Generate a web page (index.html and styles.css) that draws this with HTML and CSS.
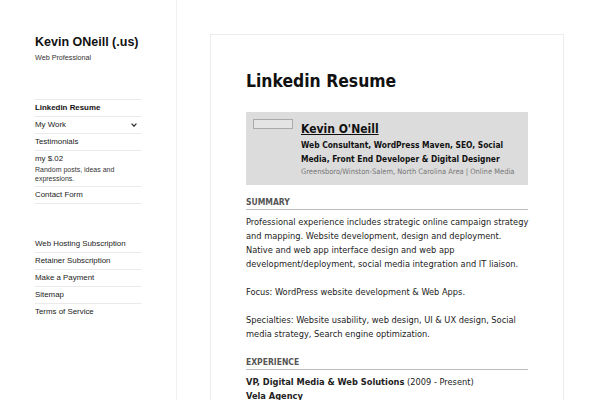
FILE: index.html
```html
<!DOCTYPE html>
<html>
<head>
<meta charset="utf-8">
<link rel="stylesheet" href="styles.css">
</head>
<body>
<div class="page">
  <aside class="sidebar">
    <div class="site-title">Kevin ONeill (.us)</div>
    <div class="site-desc">Web Professional</div>
    <ul class="menu primary">
      <li class="current">Linkedin Resume</li>
      <li class="has-sub">My Work <svg class="chev" width="6" height="4" viewBox="0 0 6 4"><path d="M0.6 0.6 L3 3.2 L5.4 0.6" fill="none" stroke="#333" stroke-width="1.3"/></svg></li>
      <li>Testimonials</li>
      <li>my $.02<span class="desc">Random posts, ideas and expressions.</span></li>
      <li>Contact Form</li>
    </ul>
    <ul class="menu secondary">
      <li>Web Hosting Subscription</li>
      <li>Retainer Subscription</li>
      <li>Make a Payment</li>
      <li>Sitemap</li>
      <li>Terms of Service</li>
    </ul>
  </aside>
  <main class="main">
    <article class="card">
      <h1 class="entry-title">Linkedin Resume</h1>
      <div class="profile">
        <div class="photo"></div>
        <div class="profile-info">
          <div class="name">Kevin O'Neill</div>
          <div class="headline">Web Consultant, WordPress Maven, SEO, Social Media, Front End Developer &amp; Digital Designer</div>
          <div class="location">Greensboro/Winston-Salem, North Carolina Area | Online Media</div>
        </div>
      </div>
      <h2 class="section">SUMMARY</h2>
      <p>Professional experience includes strategic online campaign strategy and mapping. Website development, design and deployment.<br>Native and web app interface design and web app development/deployment, social media integration and IT liaison.</p>
      <p>Focus: WordPress website development &amp; Web Apps.</p>
      <p>Specialties: Website usability, web design, UI &amp; UX design, Social media strategy, Search engine optimization.</p>
      <h2 class="section section-exp">EXPERIENCE</h2>
      <div class="job"><b>VP, Digital Media &amp; Web Solutions</b> (2009 - Present)</div>
      <div class="job"><b>Vela Agency</b></div>
    </article>
  </main>
</div>
</body>
</html>
```
FILE: styles.css
```css
html, body { margin: 0; padding: 0; background: #fff; }
body { width: 600px; height: 400px; overflow: hidden; }
.page { display: flex; align-items: flex-start; height: 400px; }
.sidebar {
  width: 177px; height: 400px; flex: none;
  box-sizing: border-box;
  padding: 34px 35px 0 35px;
  border-right: 1px solid #f1f1f1;
  font-family: "Liberation Sans", Arial, sans-serif;
  color: #333;
}
.site-title { font-size: 12.5px; font-weight: 700; line-height: 16px; color: #111; white-space: nowrap; }
.site-desc { font-size: 7.2px; line-height: 10px; margin-top: 2.5px; color: #333; }
.menu { list-style: none; margin: 0; padding: 0; border-top: 1px solid #eaeaea; }
.menu.primary { margin-top: 36px; }
.menu.secondary { margin-top: 32px; border-top: none; }
.menu li {
  font-size: 7.9px; line-height: 10px; padding: 3px 0;
  border-bottom: 1px solid #eaeaea; color: #222;
  position: relative;
}
.menu.secondary li:last-child { border-bottom: none; }
.menu li.current { font-weight: 700; color: #111; }
.menu .desc { display: block; font-size: 7px; line-height: 9px; margin-top: 1px; color: #333; }
.chev { position: absolute; right: 4px; top: 6px; }
.main { flex: 1; padding: 34px 0 0 33px; }
.card {
  width: 354px; box-sizing: border-box; min-height: 380px;
  border: 1px solid #ececec; border-bottom: none;
  padding: 34px 35px 0 35px;
  font-family: "DejaVu Sans Condensed", "DejaVu Sans", sans-serif;
  color: #222;
}
.entry-title { margin: 0 0 19px; font-size: 17.4px; line-height: 24px; font-weight: 700; color: #111; }
.profile { background: #dcdcdc; display: flex; padding: 8px 10px 7px 7px; gap: 8px; }
.photo { width: 38px; height: 8px; border: 1px solid #aaa; background: #e4e4e4; flex: none; margin-top: -1px; }
.name { font-size: 12px; font-weight: 700; line-height: 18px; text-decoration: underline; color: #111; }
.headline { font-size: 8.4px; font-weight: 700; line-height: 14px; color: #111; }
.location { font-size: 7.5px; line-height: 12px; color: #777; white-space: nowrap; }
.section {
  margin: 11px 0 0; font-size: 8.5px; font-weight: 700; color: #555;
  line-height: 12px; padding-bottom: 1px; border-bottom: 1px solid #bbb;
}
.section-exp { margin-top: 15px; }
p { margin: 5px -8px 14px 0; font-size: 9.2px; line-height: 14px; }
.job { font-size: 9.2px; line-height: 14px; }
.section + .job { margin-top: 5px; }
```
